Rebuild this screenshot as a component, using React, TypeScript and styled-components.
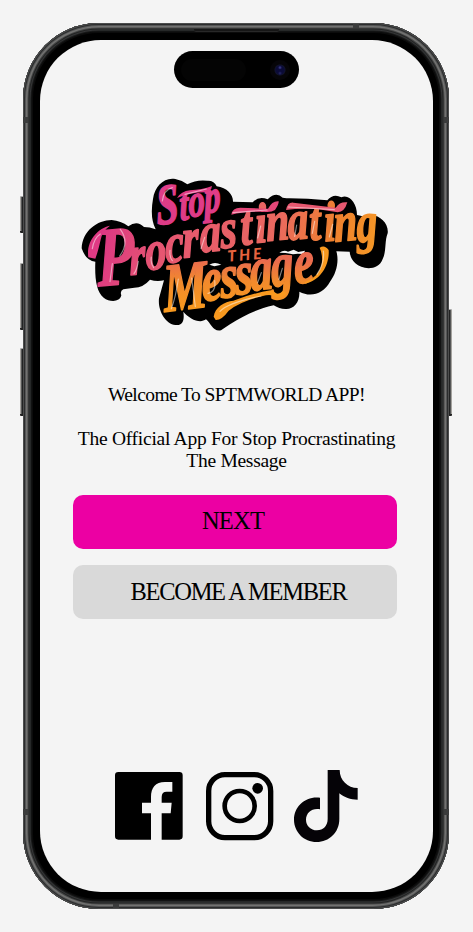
import React from "react";
import styled, { createGlobalStyle } from "styled-components";

const GlobalStyle = createGlobalStyle`
  * { box-sizing: border-box; }
  body { margin: 0; background: #f4f4f4; }
`;

const Page = styled.main`
  display: flex;
  padding: 23px 23px 0;
  height: 932px;
  overflow: hidden;
  background: #f4f4f4;
`;

const Phone = styled.div`
  position: relative;
  flex: none;
  width: 426px;
  height: 886px;
  padding: 17px 16px 16px 17px;
  border-radius: 76px;
  background: #000;
  box-shadow:
    inset 0 0 0 1px #4c4d4d,
    inset 0 0 0 2px #2b2c2d,
    inset 0 0 0 3px #545555,
    inset 0 0 0 4.5px #727271,
    inset 0 0 0 5.5px #464747,
    inset 0 0 0 6.5px #232424,
    inset 0 0 0 7.5px #353637,
    inset 0 0 0 8.5px #191a1a,
    inset 0 0 0 10px #0b0b0b;
`;

const Screen = styled.section`
  display: flex;
  flex-direction: column;
  align-items: center;
  width: 393px;
  height: 852px;
  padding-top: 125px;
  border-radius: 61px;
  background: #f4f4f4;
`;

const Island = styled.div`
  position: absolute;
  top: 28px;
  left: 151px;
  display: flex;
  align-items: center;
  justify-content: space-between;
  width: 125px;
  height: 37px;
  padding: 0 9px 0 7px;
  border-radius: 19px;
  background: #000;
`;

const Sensor = styled.div`
  width: 65px;
  height: 22px;
  border-radius: 11px;
  background: #040404;
`;

const Camera = styled.div`
  width: 20px;
  height: 20px;
  border-radius: 50%;
  background:
    radial-gradient(circle at 50% 38%, #33337c 0 0.6px, transparent 2px),
    radial-gradient(circle at 50% 66%, #20205c 0 0.6px, transparent 2px),
    radial-gradient(circle, #0b0b38 0 4px, #11132d 5px, #060508 6px);
`;

const Speaker = styled.div`
  position: absolute;
  top: 6px;
  left: 171px;
  width: 85px;
  height: 3px;
  border-radius: 0 0 2px 2px;
  background: #161616;
  border-bottom: 1px solid #282828;
`;

const SideKey = styled.div<{ $side: "left" | "right"; $top: number; $height: number }>`
  position: absolute;
  ${(p) => p.$side}: -3px;
  top: ${(p) => p.$top}px;
  width: 3px;
  height: ${(p) => p.$height}px;
  border-radius: ${(p) => (p.$side === "left" ? "1px 0 0 1px" : "0 1px 1px 0")};
  background: linear-gradient(
    to ${(p) => p.$side},
    #222323 0 1px,
    #555656 1px 2px,
    #a4a29e 2px
  );
  border-top: 1px solid #aaa;
  border-bottom: 2px solid #222;
`;

const Antenna = styled.div<{ $x: number; $y: number; $flat?: boolean }>`
  position: absolute;
  left: ${(p) => p.$x}px;
  top: ${(p) => p.$y}px;
  width: ${(p) => (p.$flat ? 6 : 5)}px;
  height: ${(p) => (p.$flat ? 4 : 6)}px;
  background: #3b3c3c;
`;

const LogoArt = styled.svg`
  display: block;
  flex: none;
  width: 330px;
  height: 180px;
  margin-right: 3px;
`;

const Intro = styled.div`
  display: flex;
  flex-direction: column;
  gap: 22px;
  margin-top: 39px;
  color: #000;
  font: 19.5px/22px "Liberation Serif", serif;
  text-align: center;
`;

const Line = styled.p<{ $spacing: number }>`
  margin: 0;
  letter-spacing: ${(p) => p.$spacing}px;
`;

const Actions = styled.div`
  display: flex;
  flex-direction: column;
  gap: 16px;
  width: 324px;
  margin: 23px 3px 0 0;
`;

const ActionButton = styled.button<{ $color: string; $shift: number; $spacing: number; $lift?: number }>`
  height: 54px;
  padding: 0 0 ${(p) => p.$lift ?? 0}px;
  border: 0;
  border-radius: 10px;
  background: ${(p) => p.$color};
  color: #000;
  font: 24.5px/30px "Liberation Serif", serif;
  letter-spacing: ${(p) => p.$spacing}px;
  text-indent: ${(p) => p.$shift}px;
  white-space: nowrap;
`;

const Socials = styled.nav`
  display: flex;
  align-items: flex-start;
  margin-top: 151px;
`;

const SocialIcon = styled.svg<{ $w: number; $h: number; $gap?: number; $drop?: number }>`
  display: block;
  width: ${(p) => p.$w}px;
  height: ${(p) => p.$h}px;
  margin: ${(p) => p.$drop ?? 0}px 0 0 ${(p) => p.$gap ?? 0}px;
`;

interface WordProps {
  /** First letter, drawn larger than the rest of the word. */
  cap: string;
  capSize: number;
  rest: string;
  size: number;
  /** Left edge and baseline of every letter, first letter included. */
  xs: number[];
  ys: number[];
  fill: string;
  tilt: number;
  squeeze: number;
}

function Word({ cap, capSize, rest, size, xs, ys, fill, tilt, squeeze }: WordProps) {
  const px = xs.map((x) => (x / squeeze).toFixed(1));
  return (
    <text
      transform={`scale(${squeeze} 1)`}
      fontFamily="'Liberation Serif', serif"
      fontWeight="700"
      fontStyle="italic"
      fill={fill}
      stroke={fill}
      strokeWidth="5"
      strokeLinejoin="round"
      x={px.join(" ")}
      y={ys.join(" ")}
      rotate={tilt}
    >
      <tspan fontSize={capSize}>{cap}</tspan>
      <tspan fontSize={size}>{rest}</tspan>
    </text>
  );
}

function Logo() {
  return (
    <LogoArt viewBox="0 0 990 540" role="img" aria-label="Stop Procrastinating The Message">
      <defs>
        <linearGradient id="pink" gradientUnits="userSpaceOnUse" x1="0" y1="60" x2="0" y2="190">
          <stop offset="0" stopColor="#e23d88" />
          <stop offset="1" stopColor="#dc3a86" />
        </linearGradient>
        <linearGradient id="sunset" gradientUnits="userSpaceOnUse" x1="140" y1="150" x2="1160" y2="520">
          <stop offset="0" stopColor="#dc3684" />
          <stop offset="0.22" stopColor="#e65572" />
          <stop offset="0.62" stopColor="#e9695f" />
          <stop offset="0.82" stopColor="#ef812f" />
          <stop offset="1" stopColor="#f59a25" />
        </linearGradient>
        <linearGradient id="amber" gradientUnits="userSpaceOnUse" x1="0" y1="285" x2="0" y2="430">
          <stop offset="0" stopColor="#ea6a4f" />
          <stop offset="0.45" stopColor="#f28a2c" />
          <stop offset="1" stopColor="#f8991f" />
        </linearGradient>
      </defs>
      <path
        d="M35 250C37 198 82 165 125 165Q153 167 175 184Q201 164 222 186Q239 186 257 193Q239 158 249 102C254 64 282 36 316 42Q337 46 352 58Q379 43 412 47Q433 46 440 64C472 68 490 91 489 110L548 112Q566 92 593 103Q618 79 638 98Q651 100 658 100Q712 100 772 106Q790 84 814 97C837 86 861 114 861 150Q888 157 904 151C932 151 957 178 953 205C943 230 950 259 938 282C926 318 877 315 856 295Q841 281 839 260L799 259C808 288 799 326 780 350C760 387 722 398 688 380C690 410 673 432 649 432Q629 433 611 421C560 433 524 450 480 478L453 496C429 501 423 475 408 463C390 477 358 462 340 440C344 466 338 483 316 480C286 476 263 437 267 400L282 346Q260 351 240 344Q219 368 193 368L160 373Q149 379 154 391C150 412 119 412 101 398C79 381 74 340 76 290Q47 287 35 250Z"
        fill="#000"
      />
      <path d="M628 263Q642 253 654 260L671 254L685 261L705 257L701 267L683 266L669 268L647 264Z" fill="#f4f4f4" />
      <path d="M418 299Q434 289 454 299L433 304Z" fill="#f4f4f4" />

      <Word
        cap="S"
        capSize={172}
        rest="top"
        size={140}
        xs={[262, 331, 358, 405]}
        ys={[179, 166, 156, 144]}
        fill="url(#pink)"
        tilt={-5}
        squeeze={0.7}
      />
      <path d="M321 99Q333 79 360 76Q396 74 426 63Q424 80 406 82Q361 82 321 99Z" fill="#e13a83" />

      <path d="M55 277C48 229 82 190 120 182Q97 198 92 224Q83 263 76 281Z" fill="#df3a84" />
      <Word
        cap="P"
        capSize={252}
        rest="rocrastinating"
        size={170}
        xs={[84, 180, 229, 288, 340, 392, 454, 514, 558, 590, 655, 720, 764, 794, 862]}
        ys={[364, 330, 315, 294, 278, 262, 250, 240, 233, 228, 225, 226, 229, 230, 232]}
        fill="url(#sunset)"
        tilt={-4}
        squeeze={0.74}
      />
      <path d="M484 149Q487 128 511 128L594 131Q607 107 626 109Q627 117 615 135Q603 143 580 140Q519 139 484 149Z" fill="#e54779" />
      <path d="M648 135Q653 111 670 113L797 128Q810 109 832 112Q824 141 803 142L740 132Q681 130 648 135Z" fill="#e75870" />

      <text
        transform="translate(474 290) rotate(-5)"
        fontFamily="Lato, sans-serif"
        fontWeight="900"
        fontStyle="italic"
        fontSize="46"
        letterSpacing="9"
        fill="#e6633f"
      >
        THE
      </text>

      <Word
        cap="M"
        capSize={206}
        rest="essage"
        size={188}
        xs={[284, 398, 454, 499, 543, 606, 675]}
        ys={[440, 409, 399, 389, 377, 365, 356]}
        fill="url(#amber)"
        tilt={-5}
        squeeze={0.72}
      />
      <path
        d="M431 455C435 426 463 410 490 407Q550 384 602 376Q608 374 614 382Q625 392 639 377L650 384Q638 401 616 395Q604 388 588 391Q516 406 476 437Q455 466 437 465Z"
        fill="#f8991f"
      />
      <path d="M704 352C757 332 765 286 749 248Q764 238 776 255C779 292 758 345 705 356Z" fill="#f8991f" />

      <g fill="none" stroke="#fff" strokeLinecap="round" strokeOpacity="0.5" strokeWidth="3.5">
        <path d="M277 108Q281 75 307 68M345 88L409 72" />
        <path d="M67 251Q72 219 91 207M151 193Q180 232 149 273M127 296L120 350M205 289Q201 314 192 326M244 276Q241 296 251 308M300 256Q298 277 307 287M404 217L393 251" />
        <path d="M489 143L591 135M655 126L793 134M572 183L563 219M674 214L680 180M734 169L727 205M788 178L778 216" />
        <path d="M304 431Q317 397 325 342M365 339L376 425M414 385Q439 381 434 347M563 353L574 323M627 343L637 310M741 328Q765 292 760 258M450 439Q472 413 573 393" />
      </g>
    </LogoArt>
  );
}

function FacebookIcon() {
  return (
    <SocialIcon $w={68} $h={68} $drop={2} viewBox="0 0 204 204" aria-label="Facebook">
      <path d="M10 0H193Q203 0 203 10V193Q203 203 193 203H140V124H167L170 92H140V75Q140 59 155 59H172V30H150C121 30 108 47 108 75V92H81V124H108V203H10Q0 203 0 193V10Q0 0 10 0Z" />
    </SocialIcon>
  );
}

function InstagramIcon() {
  return (
    <SocialIcon $w={68} $h={69} $gap={23} $drop={2} viewBox="0 0 204 207" aria-label="Instagram">
      <rect x="8" y="8" width="186" height="189" rx="49" fill="none" stroke="#000" strokeWidth="16" />
      <circle cx="101" cy="102" r="45" fill="none" stroke="#000" strokeWidth="14" />
      <circle cx="155" cy="49" r="16" />
    </SocialIcon>
  );
}

function TikTokIcon() {
  return (
    <SocialIcon $w={64} $h={72} $gap={20} viewBox="0 0 192 216" aria-label="TikTok">
      <path
        d="M101 0H137C137 31 161 54 191 54V89C169 89 151 82 136 70V147C136 188 105 216 68 216C29 216 0 185 0 149C0 108 36 77 78 83V118C55 113 36 128 36 149C36 167 50 181 69 181C88 181 101 167 101 147Z"
        fill="#050307"
      />
    </SocialIcon>
  );
}

export default function App() {
  return (
    <>
      <GlobalStyle />
      <Page>
        <Phone>
          <SideKey $side="left" $top={173} $height={37} />
          <SideKey $side="left" $top={240} $height={67} />
          <SideKey $side="left" $top={325} $height={68} />
          <SideKey $side="right" $top={286} $height={107} />
          <Antenna $x={0} $y={94} />
          <Antenna $x={421} $y={94} />
          <Antenna $x={0} $y={786} />
          <Antenna $x={421} $y={786} />
          <Antenna $x={330} $y={1} $flat />
          <Antenna $x={90} $y={881} $flat />
          <Speaker />
          <Screen>
            <Logo />
            <Intro>
              <Line $spacing={-0.57}>Welcome To SPTMWORLD APP!</Line>
              <Line $spacing={-0.27}>
                The Official App For Stop Procrastinating
                <br />
                The Message
              </Line>
            </Intro>
            <Actions>
              <ActionButton $color="#ec00a3" $shift={-4} $spacing={-0.8} $lift={3}>
                NEXT
              </ActionButton>
              <ActionButton $color="#d9d9d9" $shift={7} $spacing={-1.3}>
                BECOME A MEMBER
              </ActionButton>
            </Actions>
            <Socials>
              <FacebookIcon />
              <InstagramIcon />
              <TikTokIcon />
            </Socials>
          </Screen>
          <Island>
            <Sensor />
            <Camera />
          </Island>
        </Phone>
      </Page>
    </>
  );
}
